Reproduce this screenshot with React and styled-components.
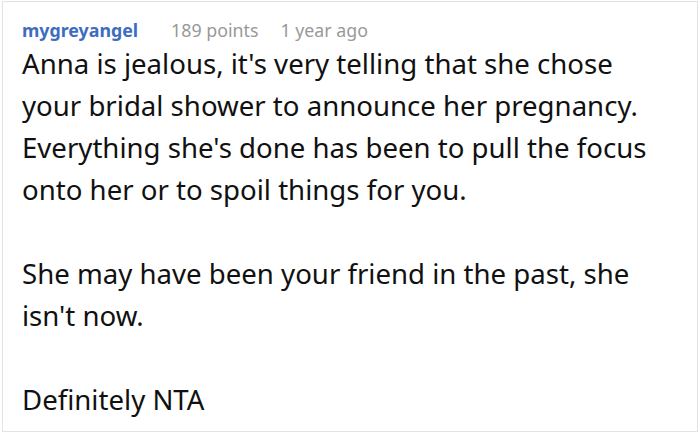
import React from "react";
import styled, { createGlobalStyle } from "styled-components";

const Global = createGlobalStyle`
  html, body { margin: 0; padding: 0; background: #fff; }
  body { font-family: "Noto Sans", "Open Sans", sans-serif; }
`;

const Frame = styled.div`
  box-sizing: border-box;
  margin: 1px 0 0 2px;
  width: 696px;
  height: 431px;
  border: 1px solid #e3e3e3;
  padding: 16px 0 0 19px;
  overflow: hidden;
`;

const Meta = styled.div`
  display: flex;
  align-items: baseline;
  gap: 22px;
  font-size: 17.8px;
  line-height: 24px;
`;

const User = styled.span`
  color: #3d6dbe;
  font-weight: 700;
  margin-right: 11px;
`;

const Muted = styled.span`
  color: #999;
`;

const Body = styled.div`
  margin-top: 0;
  font-size: 27.6px;
  line-height: 42px;
  color: #111;
  white-space: nowrap;
`;

const Para = styled.p`
  margin: 0 0 42px;
  &:last-child { margin-bottom: 0; }
`;

export default function App() {
  return (
    <>
      <Global />
      <Frame>
        <Meta>
          <User>mygreyangel</User>
          <Muted>189 points</Muted>
          <Muted>1 year ago</Muted>
        </Meta>
        <Body>
          <Para>
            Anna is jealous, it's very telling that she chose
            <br />
            your bridal shower to announce her pregnancy.
            <br />
            Everything she's done has been to pull the focus
            <br />
            onto her or to spoil things for you.
          </Para>
          <Para>
            She may have been your friend in the past, she
            <br />
            isn't now.
          </Para>
          <Para>Definitely NTA</Para>
        </Body>
      </Frame>
    </>
  );
}
